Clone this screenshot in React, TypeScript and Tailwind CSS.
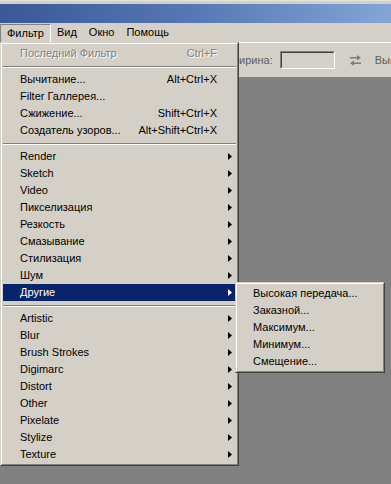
import React from 'react';

type Item =
  | { kind: 'sep' }
  | { kind: 'item'; label: string; shortcut?: string; sub?: boolean; disabled?: boolean; active?: boolean };

const filterMenu: Item[] = [
  { kind: 'item', label: 'Последний Фильтр', shortcut: 'Ctrl+F', disabled: true },
  { kind: 'sep' },
  { kind: 'item', label: 'Вычитание...', shortcut: 'Alt+Ctrl+X' },
  { kind: 'item', label: 'Filter Галлерея...' },
  { kind: 'item', label: 'Сжижение...', shortcut: 'Shift+Ctrl+X' },
  { kind: 'item', label: 'Создатель узоров...', shortcut: 'Alt+Shift+Ctrl+X' },
  { kind: 'sep' },
  { kind: 'item', label: 'Render', sub: true },
  { kind: 'item', label: 'Sketch', sub: true },
  { kind: 'item', label: 'Video', sub: true },
  { kind: 'item', label: 'Пикселизация', sub: true },
  { kind: 'item', label: 'Резкость', sub: true },
  { kind: 'item', label: 'Смазывание', sub: true },
  { kind: 'item', label: 'Стилизация', sub: true },
  { kind: 'item', label: 'Шум', sub: true },
  { kind: 'item', label: 'Другие', sub: true, active: true },
  { kind: 'sep' },
  { kind: 'item', label: 'Artistic', sub: true },
  { kind: 'item', label: 'Blur', sub: true },
  { kind: 'item', label: 'Brush Strokes', sub: true },
  { kind: 'item', label: 'Digimarc', sub: true },
  { kind: 'item', label: 'Distort', sub: true },
  { kind: 'item', label: 'Other', sub: true },
  { kind: 'item', label: 'Pixelate', sub: true },
  { kind: 'item', label: 'Stylize', sub: true },
  { kind: 'item', label: 'Texture', sub: true },
];

const otherMenu = ['Высокая передача...', 'Заказной...', 'Максимум...', 'Минимум...', 'Смещение...'];

const Arrow: React.FC<{ white?: boolean }> = ({ white }) => (
  <svg width="4" height="7" viewBox="0 0 4 7" className="ml-auto mr-[4px]">
    <polygon points="0,0 4,3.5 0,7" fill={white ? '#ffffff' : '#000000'} />
  </svg>
);

// classic 3d raised frame
const Frame: React.FC<{ className?: string; children: React.ReactNode }> = ({ className = '', children }) => (
  <div className={`absolute border border-t-[#d4d0c8] border-l-[#d4d0c8] border-r-[#404040] border-b-[#404040] ${className}`}>
    <div className="border border-t-white border-l-white border-r-[#808080] border-b-[#808080] bg-[#d4d0c8] p-[1px]">
      {children}
    </div>
  </div>
);

const MenuRow: React.FC<{ item: Item }> = ({ item }) => {
  if (item.kind === 'sep') {
    return (
      <div className="h-[9px] flex items-center">
        <div className="w-full h-[2px] border-t border-t-[#808080] border-b border-b-white" />
      </div>
    );
  }
  const textCls = item.disabled
    ? 'text-[#808080] [text-shadow:1px_1px_0_#ffffff]'
    : item.active
      ? 'text-white'
      : 'text-black';
  return (
    <div className={`h-[17px] flex items-center pl-[17px] whitespace-nowrap ${item.active ? 'bg-[#0a246a]' : ''} ${textCls}`}>
      <span>{item.label}</span>
      {item.shortcut && <span className="ml-auto mr-[19px]">{item.shortcut}</span>}
      {item.sub && <Arrow white={item.active} />}
    </div>
  );
};

const SwapIcon = () => (
  <svg width="13" height="11" viewBox="0 0 13 11">
    <g fill="#7c7c7c">
      <rect x="1" y="2" width="8" height="1.5" />
      <polygon points="8,0 12,2.75 8,5.5" />
      <rect x="4" y="7.5" width="8" height="1.5" />
      <polygon points="5,5.5 1,8.25 5,11" />
    </g>
  </svg>
);

export default function App() {
  return (
    <div className="relative w-[391px] h-[484px] overflow-hidden bg-[#808080] text-[11px] leading-none text-black font-['Liberation_Sans',Arial,sans-serif] flex flex-col">
      {/* window top edge */}
      <div className="h-[4px] bg-[#d4d0c8] border-t border-t-[#e4e2dc]" />
      {/* title bar */}
      <div className="h-[19px] bg-linear-to-r from-[#3a5898] via-[#5878b4] to-[#84a5d6]" />
      {/* menu bar */}
      <div className="h-[19px] bg-[#d4d0c8] flex items-stretch">
        <div className="px-[6px] flex items-center border-t border-l border-t-[#808080] border-l-[#808080] border-r border-r-white mt-[1px]">
          Фильтр
        </div>
        <div className="px-[6px] flex items-center">Вид</div>
        <div className="px-[6px] flex items-center">Окно</div>
        <div className="px-[6px] flex items-center">Помощь</div>
      </div>
      {/* options bar */}
      <div className="h-[35px] bg-[#d4d0c8] border-t border-t-white flex items-center pl-[229px] text-[#5e5e5e] whitespace-nowrap overflow-hidden">
        <span className="shrink-0">Ширина:</span>
        <div className="shrink-0 ml-[7px] w-[55px] h-[18px] border border-t-[#808080] border-l-[#808080] border-r-white border-b-white">
          <div className="w-full h-full border border-t-[#404040] border-l-[#404040] border-r-[#d4d0c8] border-b-[#d4d0c8]" />
        </div>
        <div className="shrink-0 ml-[14px] flex items-center">
          <SwapIcon />
        </div>
        <span className="shrink-0 ml-[13px]">Высота:</span>
      </div>
      {/* workspace */}
      <div className="flex-1 bg-[#808080]" />

      {/* Фильтр dropdown */}
      <Frame className="left-0 top-[42px] w-[239px]">
        {filterMenu.map((it, i) => (
          <MenuRow key={i} item={it} />
        ))}
      </Frame>

      {/* Другие submenu */}
      <Frame className="left-[235px] top-[282px] w-[150px]">
        {otherMenu.map((label) => (
          <div key={label} className="h-[17px] flex items-center pl-[15px] whitespace-nowrap">
            {label}
          </div>
        ))}
      </Frame>
    </div>
  );
}
